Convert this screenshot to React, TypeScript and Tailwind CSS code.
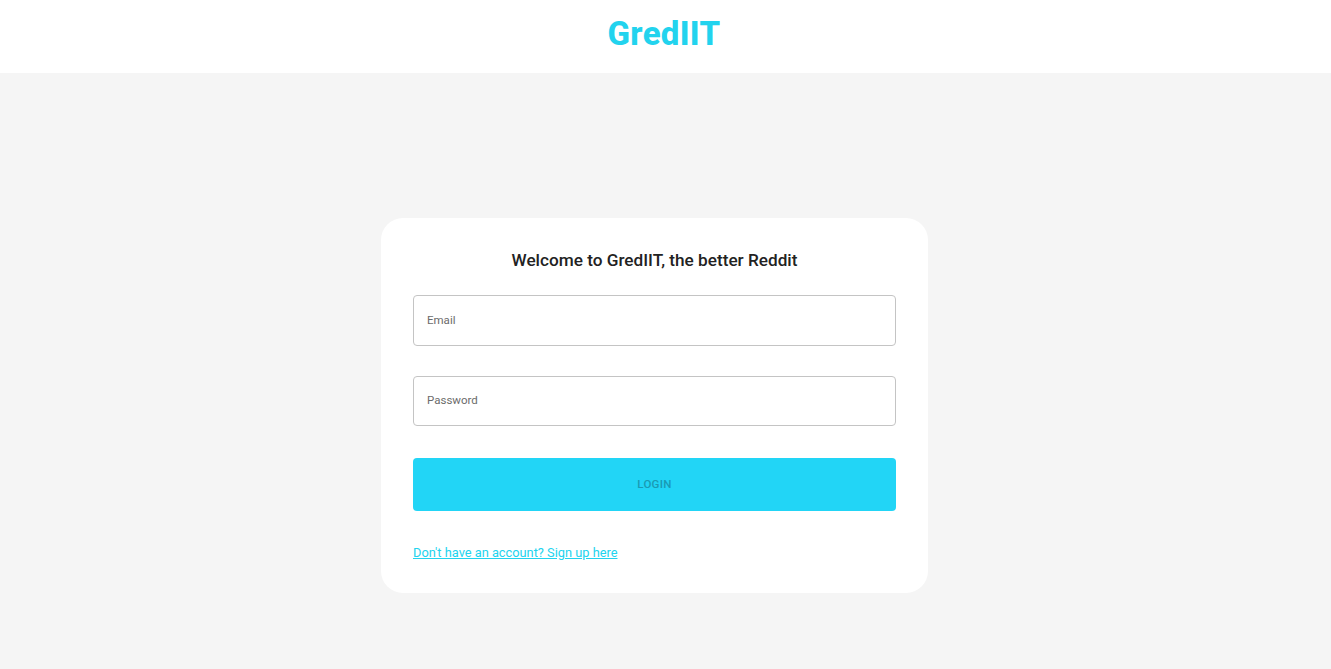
export default function App() {
  return (
    <div className="min-h-screen bg-[#f5f5f5] font-['Roboto','Liberation_Sans',sans-serif]">
      <header className="h-[73px] bg-white flex items-center justify-center">
        <h1 className="text-[33px] font-extrabold text-[#22d3ee] -mt-[5px] pr-[3px] tracking-[0.3px]">GredIIT</h1>
      </header>

      <main className="flex justify-center pt-[145px] pr-[22px]">
        <div className="w-[547px] bg-white rounded-[22px] px-8 pt-8 pb-[32px]">
          <h2 className="text-center text-[17.2px] leading-5 font-medium text-[#222]">
            Welcome to GredIIT, the better Reddit
          </h2>

          <div className="mt-[25px] h-[51px] border border-[#c4c4c4] rounded-[4px] flex items-center px-[13px]">
            <input
              placeholder="Email"
              className="w-full outline-none text-[11.5px] text-[#333] placeholder:text-[#6b6b6b]"
            />
          </div>

          <div className="mt-[30px] h-[50px] border border-[#c4c4c4] rounded-[4px] flex items-center px-[13px]">
            <input
              type="password"
              placeholder="Password"
              className="w-full outline-none text-[11.5px] text-[#333] placeholder:text-[#6b6b6b]"
            />
          </div>

          <button className="mt-8 w-full h-[53px] rounded-[4px] bg-[#22d5f6] text-[11.5px] font-medium tracking-wide text-[#1a9ab3]">
            LOGIN
          </button>

          <div className="mt-[33px] leading-4">
            <a href="#" className="text-[12.8px] text-[#22d3ee] underline">
              Don't have an account? Sign up here
            </a>
          </div>
        </div>
      </main>
    </div>
  );
}
